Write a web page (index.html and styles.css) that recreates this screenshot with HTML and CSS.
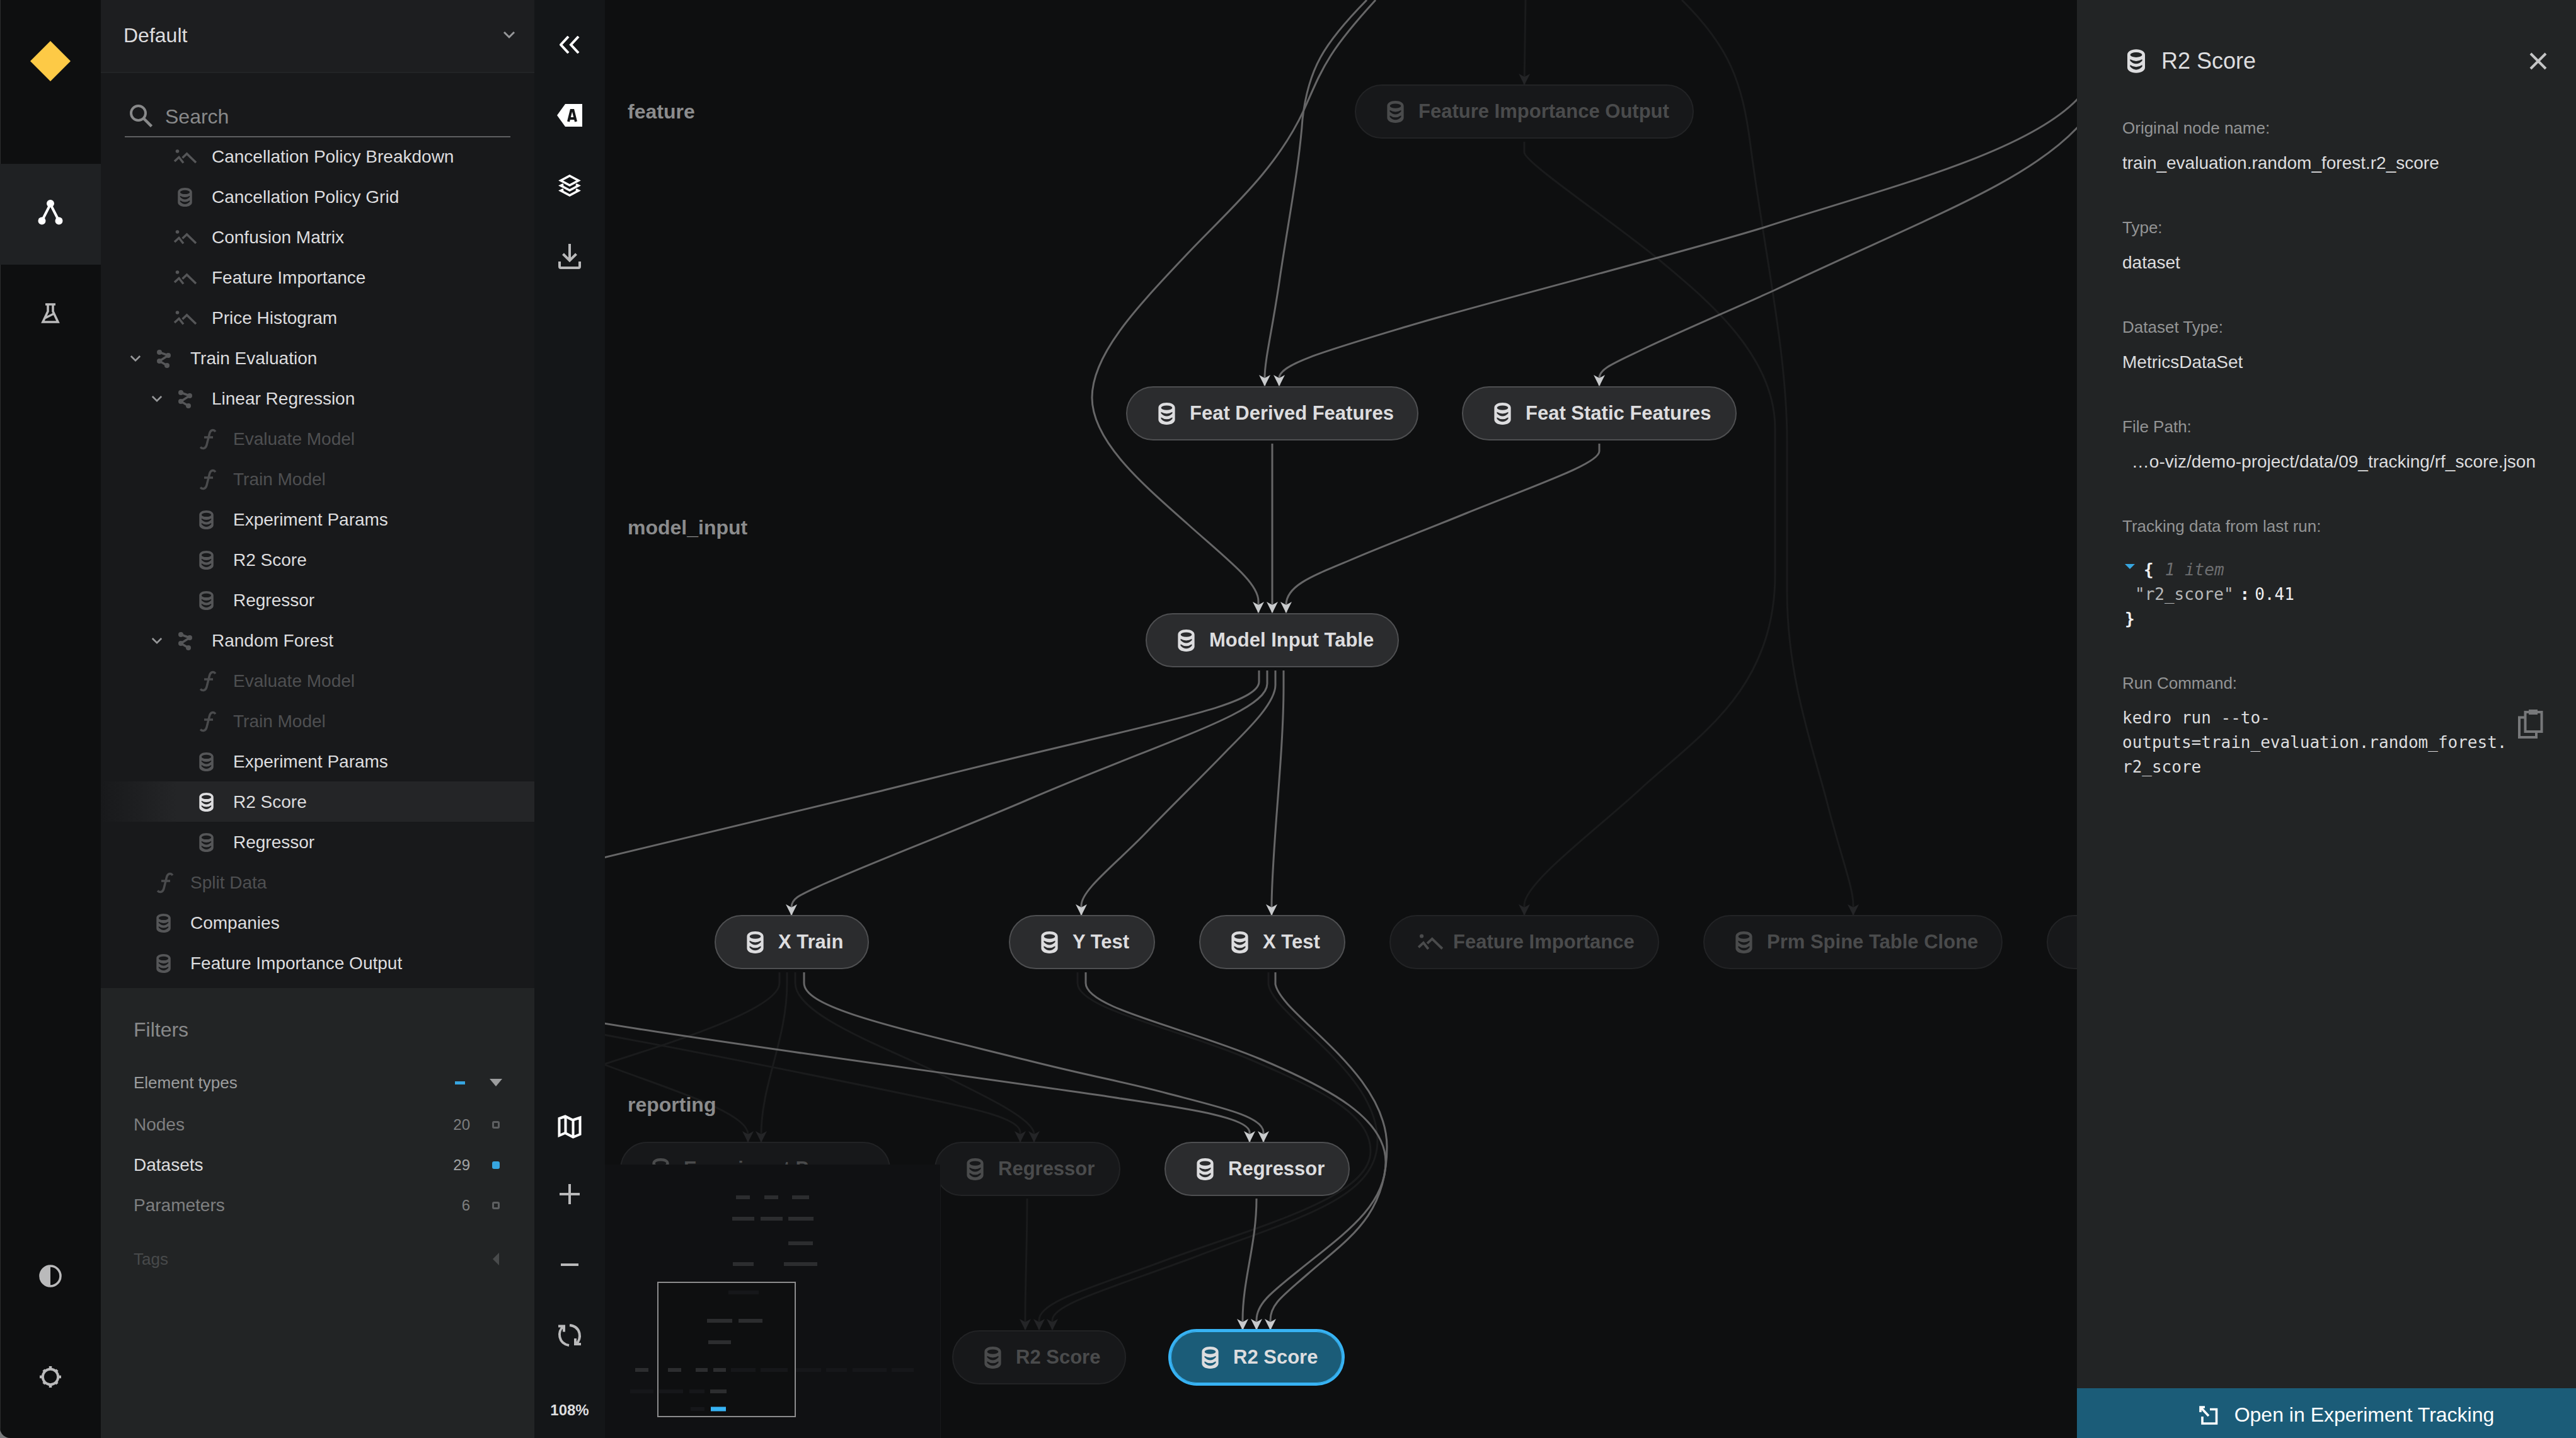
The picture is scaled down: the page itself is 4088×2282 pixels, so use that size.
FILE: index.html
```html
<!DOCTYPE html>
<html lang="en">
<head>
<meta charset="utf-8">
<title>Kedro-Viz</title>
<link rel="stylesheet" href="styles.css">
</head>
<body>
<svg class="sprite" aria-hidden="true">
  <symbol id="i-data" viewBox="0 0 24 32"><path fill="currentColor" fill-rule="evenodd" d="M0 7.500C0 3 5 0 12 0s12 3 12 7.500v17C24 29 19 32 12 32S0 29 0 24.500zM3.900 7.400a8.100 3.400 0 0016.200 0a8.100 3.400 0 00-16.200 0zM3.800 13.500Q12 18.300 20.200 13.500V15.500Q12 23.900 3.800 15.500zM3.800 21.200Q12 26.800 20.200 21.200V23.500Q12 31.900 3.800 23.500z"/></symbol>
  <symbol id="i-plot" viewBox="0 0 36 24"><circle cx="5.500" cy="3" r="2.800" fill="currentColor"/><path d="M1 19l7-6.500 7 9M13.500 13.500l7-6.500L35 21" fill="none" stroke="currentColor" stroke-width="3.500"/></symbol>
  <symbol id="i-pipe" viewBox="0 0 24 30"><g fill="currentColor"><circle cx="5" cy="5" r="4"/><circle cx="19" cy="10" r="4"/><circle cx="5" cy="19" r="4"/><circle cx="17" cy="26" r="4"/></g><path d="M5 5l14 5L5 19l12 7" fill="none" stroke="currentColor" stroke-width="3.500"/></symbol>
  <symbol id="i-func" viewBox="0 0 28 34"><path d="M26 5c-3-4-8-3-9.500 3L12 26c-1.500 6-6.500 7-10 3.500M8 14h14" fill="none" stroke="currentColor" stroke-width="3.500"/></symbol>
  <symbol id="i-down" viewBox="0 0 20 14"><path d="M2 2l8 8 8-8" fill="none" stroke="currentColor" stroke-width="3"/></symbol>
</svg>
<div class="app">
  <nav class="nav">
    <a class="nav-logo" href="#" aria-label="Kedro"><svg width="64" height="64" viewBox="0 0 64 64"><path d="M32 0l32 32-32 32L0 32z" fill="#fdca46"/></svg></a>
    <a class="nav-link active" href="#" aria-label="Flowchart"><svg width="40" height="42" viewBox="0 0 40 42"><path d="M6.500 34.500L20 8l13.500 26.500" fill="none" stroke="currentColor" stroke-width="4"/><g fill="currentColor"><circle cx="20" cy="7" r="6"/><circle cx="6.500" cy="34.500" r="6"/><circle cx="33.500" cy="34.500" r="6"/></g></svg></a>
    <a class="nav-link" href="#" aria-label="Experiment tracking"><svg width="30" height="32" viewBox="0 0 30 32"><path d="M7 2h16M11 2v11L3 30h24l-8-17V2M6 24l14-7" fill="none" stroke="currentColor" stroke-width="3.600"/></svg></a>
    <div class="nav-foot">
      <button class="nav-link" type="button" aria-label="Toggle theme"><svg width="36" height="36" viewBox="0 0 36 36"><circle cx="18" cy="18" r="16" fill="none" stroke="currentColor" stroke-width="3.600"/><path d="M18 2a16 16 0 000 32z" fill="currentColor"/></svg></button>
      <button class="nav-link" type="button" aria-label="Settings"><svg width="36" height="36" viewBox="0 0 36 36"><circle cx="18" cy="18" r="12.200" fill="none" stroke="currentColor" stroke-width="4"/><path d="M18 1v5M18 30v5M1 18h5M30 18h5M7 7l3 3M26 26l3 3M29 7l-3 3M10 26l-3 3" stroke="currentColor" stroke-width="4.500"/></svg></button>
    </div>
  </nav>

  <aside class="sidebar">
    <div class="pipeline">
      <select aria-label="Pipeline"><option>Default</option></select>
      <svg width="22" height="14"><use href="#i-down"/></svg>
    </div>
    <div class="search">
      <label class="search-field">
        <svg width="36" height="36" viewBox="0 0 36 36"><circle cx="13.500" cy="13.500" r="11.500" fill="none" stroke="currentColor" stroke-width="4"/><path d="M22 22l12.500 12.500" stroke="currentColor" stroke-width="4.500"/></svg>
        <input type="search" placeholder="Search" aria-label="Search">
      </label>
    </div>
    <ul class="tree">
      <li class="row l1"><span class="tog"></span><svg class="ic plot"><use href="#i-plot"/></svg><a href="#">Cancellation Policy Breakdown</a></li>
      <li class="row l1"><span class="tog"></span><svg class="ic data"><use href="#i-data"/></svg><a href="#">Cancellation Policy Grid</a></li>
      <li class="row l1"><span class="tog"></span><svg class="ic plot"><use href="#i-plot"/></svg><a href="#">Confusion Matrix</a></li>
      <li class="row l1"><span class="tog"></span><svg class="ic plot"><use href="#i-plot"/></svg><a href="#">Feature Importance</a></li>
      <li class="row l1"><span class="tog"></span><svg class="ic plot"><use href="#i-plot"/></svg><a href="#">Price Histogram</a></li>
      <li class="row"><button class="tog" type="button" aria-label="Collapse Train Evaluation"><svg><use href="#i-down"/></svg></button><svg class="ic pipe"><use href="#i-pipe"/></svg><a href="#">Train Evaluation</a></li>
      <li class="row l1"><button class="tog" type="button" aria-label="Collapse Linear Regression"><svg><use href="#i-down"/></svg></button><svg class="ic pipe"><use href="#i-pipe"/></svg><a href="#">Linear Regression</a></li>
      <li class="row l2 off"><span class="tog"></span><svg class="ic func"><use href="#i-func"/></svg><a href="#">Evaluate Model</a></li>
      <li class="row l2 off"><span class="tog"></span><svg class="ic func"><use href="#i-func"/></svg><a href="#">Train Model</a></li>
      <li class="row l2"><span class="tog"></span><svg class="ic data"><use href="#i-data"/></svg><a href="#">Experiment Params</a></li>
      <li class="row l2"><span class="tog"></span><svg class="ic data"><use href="#i-data"/></svg><a href="#">R2 Score</a></li>
      <li class="row l2"><span class="tog"></span><svg class="ic data"><use href="#i-data"/></svg><a href="#">Regressor</a></li>
      <li class="row l1"><button class="tog" type="button" aria-label="Collapse Random Forest"><svg><use href="#i-down"/></svg></button><svg class="ic pipe"><use href="#i-pipe"/></svg><a href="#">Random Forest</a></li>
      <li class="row l2 off"><span class="tog"></span><svg class="ic func"><use href="#i-func"/></svg><a href="#">Evaluate Model</a></li>
      <li class="row l2 off"><span class="tog"></span><svg class="ic func"><use href="#i-func"/></svg><a href="#">Train Model</a></li>
      <li class="row l2"><span class="tog"></span><svg class="ic data"><use href="#i-data"/></svg><a href="#">Experiment Params</a></li>
      <li class="row l2 selected"><span class="tog"></span><svg class="ic data"><use href="#i-data"/></svg><a href="#">R2 Score</a></li>
      <li class="row l2"><span class="tog"></span><svg class="ic data"><use href="#i-data"/></svg><a href="#">Regressor</a></li>
      <li class="row off"><span class="tog"></span><svg class="ic func"><use href="#i-func"/></svg><a href="#">Split Data</a></li>
      <li class="row"><span class="tog"></span><svg class="ic data"><use href="#i-data"/></svg><a href="#">Companies</a></li>
      <li class="row"><span class="tog"></span><svg class="ic data"><use href="#i-data"/></svg><a href="#">Feature Importance Output</a></li>
    </ul>
    <section class="filters">
      <h2>Filters</h2>
      <div class="group">
        <label for="f-types">Element types</label>
        <input class="dash" id="f-types" type="checkbox">
        <button type="button" aria-label="Collapse element types"><svg width="20" height="12" viewBox="0 0 20 12"><path d="M0 0h20L10 12z" fill="currentColor"/></svg></button>
      </div>
      <label class="filter"><span>Nodes</span><span class="count">20</span><input type="checkbox"></label>
      <label class="filter on"><span>Datasets</span><span class="count">29</span><input type="checkbox" checked></label>
      <label class="filter"><span>Parameters</span><span class="count">6</span><input type="checkbox"></label>
      <div class="group tags">
        <span>Tags</span>
        <button type="button" aria-label="Expand tags"><svg width="10" height="20" viewBox="0 0 10 20"><path d="M10 0v20L0 10z" fill="currentColor"/></svg></button>
      </div>
    </section>
  </aside>

  <div class="toolbar">
    <button class="lit" type="button" aria-label="Hide menu"><svg width="32" height="28" viewBox="0 0 32 28"><path d="M14 1L2 14l12 13M30 1L18 14l12 13" fill="none" stroke="currentColor" stroke-width="4"/></svg></button>
    <button class="lit" type="button" aria-label="Hide text labels"><svg width="40" height="36" viewBox="0 0 40 36"><path d="M13 0h27v36H13L0 18z" fill="currentColor"/><path d="M18 28L22.500 10h3L30 28M19.500 23h9" fill="none" stroke="#141618" stroke-width="4"/></svg></button>
    <button class="lit" type="button" aria-label="Hide layers"><svg width="36" height="36" viewBox="0 0 36 36"><g fill="none" stroke="currentColor" stroke-width="3.600"><path d="M18 2l14 7.500L18 17 4 9.500z"/><path d="M8 15.500l-4 2L18 25l14-7.500-4-2M8 23.500l-4 2L18 33l14-7.500-4-2"/></g></svg></button>
    <button type="button" aria-label="Export graph"><svg width="36" height="40" viewBox="0 0 36 40"><path d="M18 0v27M7.500 16L18 26.500 28.500 16M2 28v8q0 2 2 2h28q2 0 2-2v-8" fill="none" stroke="currentColor" stroke-width="4"/></svg></button>
    <div class="zoom">
      <button class="lit map" type="button" aria-label="Hide minimap"><svg width="38" height="38" viewBox="0 0 38 38"><path d="M2.500 6L12 2.500l12 6 11.500-4V31L24.500 35.500 12 29 2.500 33zM12.500 3v26M24.500 9v26" fill="none" stroke="currentColor" stroke-width="4"/></svg></button>
      <button type="button" aria-label="Zoom in"><svg width="32" height="32" viewBox="0 0 32 32"><path d="M16 0v32M0 16h32" stroke="currentColor" stroke-width="4"/></svg></button>
      <button type="button" aria-label="Zoom out"><svg width="28" height="4" viewBox="0 0 28 4"><path d="M0 2h28" stroke="currentColor" stroke-width="4"/></svg></button>
      <button type="button" aria-label="Reset zoom"><svg width="38" height="36" viewBox="0 0 38 36"><path d="M1 3.500h9v9M9 4C-1 12 1 31 18 34M37 32h-9v-9M29 32C39 24 37 4 19 2" fill="none" stroke="currentColor" stroke-width="4"/></svg></button>
      <div class="percent">108%</div>
    </div>
  </div>

  <main class="canvas">
    <svg class="edges" aria-hidden="true">
      <defs>
        <marker id="arrow" markerUnits="userSpaceOnUse" markerWidth="18" markerHeight="18" refX="17" refY="9" orient="auto"><path d="M0 0l18 9-18 9 5-9z"/></marker>
        <marker id="arrow-dim" markerUnits="userSpaceOnUse" markerWidth="18" markerHeight="18" refX="17" refY="9" orient="auto"><path d="M0 0l18 9-18 9 5-9z"/></marker>
      </defs>
      <g transform="translate(-960 0)">
        <g class="dim">
          <path d="M2421 0Q2420 60 2419 134"/>
          <path d="M2419 225V242C2419 258 2570 359 2635 414C2700 469 2817 560 2817 680V912C2817 1090 2700 1165 2611 1245C2540 1312 2419 1400 2419 1436V1452"/>
          <path d="M2669 0C2745 75 2765 130 2778 231C2800 400 2836 560 2836 700V940C2836 1080 2880 1195 2902 1283C2925 1370 2941 1410 2941 1436V1452"/>
          <path d="M958 1642C1120 1672 1300 1708 1454 1740C1550 1760 1619 1775 1619 1797V1812"/>
          <path d="M1262 1543V1560C1262 1610 1400 1660 1479 1698C1560 1738 1641 1775 1641 1800V1812"/>
          <path d="M1249 1543V1560C1249 1650 1208 1720 1208 1800V1812"/>
          <path d="M958 1689C1060 1728 1187 1765 1187 1800V1812"/>
          <path d="M1710 1543V1560C1710 1600 1860 1630 1976 1678C2090 1727 2175 1765 2175 1827C2175 1900 2000 1945 1852 1999C1730 2045 1649 2065 1649 2095V2110"/>
          <path d="M2013 1543V1562C2020 1612 2186 1700 2186 1810C2186 1905 2050 1935 1893 1996C1760 2045 1670 2070 1670 2095V2110"/>
          <path d="M1630 1902C1630 1980 1627 2030 1627 2095V2110"/>
        </g>
        <path class="dim-tail" d="M1237 1543V1560C1237 1600 1080 1650 958 1689"/>
        <g class="lit">
          <path d="M2169 0C2100 70 2076 110 2067 189C2062 260 2047 337 2032 435C2020 520 2007 570 2007 600V612"/>
          <path d="M2183 0C2105 85 2098 110 2069 175C2024 272 1946 337 1884 403C1809 483 1733 560 1733 631C1733 700 1814 769 1884 831C1950 890 1997 925 1997 954V972"/>
          <path d="M3298 156C3215 245 2979 302 2799 361C2660 404 2363 479 2233 518C2103 557 2030 578 2030 600V612"/>
          <path d="M3298 201C3215 290 3060 345 2815 461C2740 495 2680 520 2614 551C2560 577 2538 585 2538 600V612"/>
          <path d="M2019 704V972"/>
          <path d="M2538 704V716C2538 735 2450 765 2328 814C2250 846 2190 868 2140 890C2080 915 2041 930 2041 960V972"/>
          <path d="M2011 1064V1085C2011 1130 1850 1175 1629 1270C1500 1325 1400 1362 1307 1403C1270 1420 1256 1425 1256 1440V1452"/>
          <path d="M2024 1064V1087C2024 1115 1983 1155 1950 1188C1910 1230 1865 1273 1820 1320C1770 1372 1716 1412 1716 1437V1452"/>
          <path d="M2037 1064V1090C2037 1200 2018 1350 2018 1440V1452"/>
          <path d="M1276 1543V1560C1276 1600 1420 1630 1636 1684C1740 1710 1790 1718 1852 1735C1940 1758 2005 1772 2005 1797V1812"/>
          <path d="M958 1624C1150 1656 1440 1694 1752 1739C1850 1755 1983 1770 1983 1797V1812"/>
          <path d="M1723 1543V1560C1723 1600 1880 1630 2001 1681C2110 1727 2199 1775 2199 1844C2199 1915 2130 1960 2060 2017C2015 2053 1994 2070 1994 2095V2110"/>
          <path d="M2024 1543V1562C2034 1612 2201 1700 2201 1820C2201 1930 2140 1965 2075 2022C2035 2057 2016 2070 2016 2095V2110"/>
          <path d="M1994 1902C1994 1975 1972 2030 1972 2095V2110"/>
        </g>
        <path class="lit-tail" d="M1998 1064V1082C1998 1115 1860 1142 1705 1180C1560 1214 1500 1230 1399 1255L958 1361"/>
      </g>
    </svg>

    <h3 class="layer" style="left:36px;top:157px">feature</h3>
    <h3 class="layer" style="left:36px;top:817px">model_input</h3>
    <h3 class="layer" style="left:36px;top:1733px">reporting</h3>

    <button class="node dim" type="button" style="left:1190px;top:134px;width:538px"><svg class="data"><use href="#i-data"/></svg>Feature Importance Output</button>
    <button class="node" type="button" style="left:827px;top:613px;width:464px"><svg class="data"><use href="#i-data"/></svg>Feat Derived Features</button>
    <button class="node" type="button" style="left:1360px;top:613px;width:436px"><svg class="data"><use href="#i-data"/></svg>Feat Static Features</button>
    <button class="node" type="button" style="left:858px;top:973px;width:402px"><svg class="data"><use href="#i-data"/></svg>Model Input Table</button>
    <button class="node" type="button" style="left:174px;top:1452px;width:245px"><svg class="data"><use href="#i-data"/></svg>X Train</button>
    <button class="node" type="button" style="left:641px;top:1452px;width:232px"><svg class="data"><use href="#i-data"/></svg>Y Test</button>
    <button class="node" type="button" style="left:943px;top:1452px;width:232px"><svg class="data"><use href="#i-data"/></svg>X Test</button>
    <button class="node dim" type="button" style="left:1245px;top:1452px;width:428px"><svg class="plot"><use href="#i-plot"/></svg>Feature Importance</button>
    <button class="node dim" type="button" style="left:1743px;top:1452px;width:475px"><svg class="data"><use href="#i-data"/></svg>Prm Spine Table Clone</button>
    <button class="node dim" type="button" style="left:2288px;top:1452px;width:400px" aria-label="Parameters"></button>
    <button class="node dim" type="button" style="left:24px;top:1812px;width:429px"><svg class="data"><use href="#i-data"/></svg>Experiment Params</button>
    <button class="node dim" type="button" style="left:523px;top:1812px;width:295px"><svg class="data"><use href="#i-data"/></svg>Regressor</button>
    <button class="node" type="button" style="left:888px;top:1812px;width:294px"><svg class="data"><use href="#i-data"/></svg>Regressor</button>
    <button class="node dim" type="button" style="left:551px;top:2111px;width:276px"><svg class="data"><use href="#i-data"/></svg>R2 Score</button>
    <button class="node current" type="button" style="left:896px;top:2111px;width:276px"><svg class="data"><use href="#i-data"/></svg>R2 Score</button>

    <div class="minimap">
      <svg viewBox="960 1848 532 434" aria-label="Minimap">
        <rect x="1044" y="2035" width="218" height="213" fill="#0e0f10" stroke="#8c8c8d" stroke-width="2"/>
        <path stroke="#2c2d2f" stroke-width="6" d="M1168 1900h22M1213 1900h22M1257 1900h27M1162 1934h35M1207 1934h35M1251 1934h40M1251 1973h39M1163 2006h33M1244 2006h53M1122 2096h40M1172 2096h38M1124 2130h36M1008 2174h21M1060 2174h21M1104 2174h19M1132 2174h20M1127 2208h26"/>
        <path stroke="#16171a" stroke-width="6" d="M1156 2051h48M1160 2174h39M1207 2174h43M1263 2174h40M1311 2174h33M1353 2174h54M1415 2174h35M1000 2208h37M1046 2208h38M1094 2208h24M1096 2236h22"/>
        <path stroke="#37b3f4" stroke-width="7" d="M1128 2236h24"/>
      </svg>
    </div>
  </main>

  <aside class="panel">
    <header class="panel-head">
      <svg width="28" height="38"><use href="#i-data"/></svg>
      <h1>R2 Score</h1>
      <button type="button" aria-label="Close"><svg width="28" height="28" viewBox="0 0 28 28"><path d="M2 2l24 24M26 2L2 26" stroke="currentColor" stroke-width="4"/></svg></button>
    </header>
    <dl class="meta">
      <div><dt>Original node name:</dt><dd>train_evaluation.random_forest.r2_score</dd></div>
      <div><dt>Type:</dt><dd>dataset</dd></div>
      <div><dt>Dataset Type:</dt><dd>MetricsDataSet</dd></div>
      <div><dt>File Path:</dt><dd class="path">…o-viz/demo-project/data/09_tracking/rf_score.json</dd></div>
      <div>
        <dt>Tracking data from last run:</dt>
        <dd class="json">
          <div class="json-open"><button type="button" aria-label="Collapse data"><svg width="16" height="8" viewBox="0 0 16 8"><path d="M0 0h16L8 8z" fill="currentColor"/></svg></button><b>{</b><i>1 item</i></div>
          <div class="json-item"><span>"r2_score"</span><b>:</b><span class="num">0.41</span></div>
          <div class="json-close"><b>}</b></div>
        </dd>
      </div>
      <div>
        <dt>Run Command:</dt>
        <dd class="command">
          <code>kedro run --to-<br>outputs=train_evaluation.random_forest.<br>r2_score</code>
          <button type="button" aria-label="Copy run command"><svg width="40" height="46" viewBox="0 0 40 46"><path d="M11.500 4h26v31h-26zM9.500 12.500H2V44h27v-7" fill="none" stroke="currentColor" stroke-width="4"/><path d="M17 0h14v8H17z" fill="currentColor"/></svg></button>
        </dd>
      </div>
    </dl>
    <button class="open" type="button"><svg width="30" height="30" viewBox="0 0 30 30"><path d="M2 10V2h7M2 2l13 14M17 5.500h10.500v22.500H5V17" fill="none" stroke="currentColor" stroke-width="3.600"/></svg>Open in Experiment Tracking</button>
  </aside>
</div>
</body>
</html>
```
FILE: styles.css
```css
* { box-sizing: border-box; }

html { background: #77787a; }

body {
  margin: 0;
  font-family: "Liberation Sans", Arial, sans-serif;
  font-size: 28px;
  color: #dddddf;
}

button, input, select { font: inherit; color: inherit; }

button {
  display: flex;
  align-items: center;
  justify-content: center;
  padding: 0;
  border: 0;
  background: none;
  cursor: pointer;
}

a { color: inherit; text-decoration: none; }

h1, h2, h3, ul, dl, dd { margin: 0; padding: 0; font-weight: normal; }

svg { display: block; flex: none; }

.sprite { position: absolute; width: 0; height: 0; }

.app {
  display: flex;
  min-height: 100vh;
  overflow: hidden;
  border-bottom-left-radius: 16px;
  background: #0e0f10;
}

/* Left navigation */
.nav {
  display: flex;
  flex: none;
  flex-direction: column;
  width: 160px;
  box-shadow: inset 1px 0 #2c2d2f;
}

.nav-logo { display: flex; justify-content: center; height: 260px; padding-top: 65px; }

.nav-link {
  display: flex;
  align-items: center;
  justify-content: center;
  width: 100%;
  height: 160px;
  padding-bottom: 6px;
  color: #bababb;
}

.nav-link.active { background: #1f2123; color: #fff; }

.nav-foot { margin-top: auto; padding-bottom: 14px; }

/* Sidebar */
.sidebar {
  display: flex;
  flex: none;
  flex-direction: column;
  width: 688px;
  background: #18191b;
}

.pipeline {
  display: flex;
  align-items: center;
  height: 116px;
  padding: 0 29px 2px 36px;
  border-bottom: 2px solid #222426;
  background: #1d1e20;
}

.pipeline select {
  flex: 1;
  padding: 0;
  border: 0;
  background: none;
  font-size: 32px;
  appearance: none;
}

.pipeline svg { color: #97989a; }

.search { padding: 36px 38px 0; }

.search-field {
  display: flex;
  align-items: center;
  gap: 20px;
  height: 64px;
  padding-left: 8px;
  color: #88898a;
  box-shadow: 0 2px #5f6062;
}

.search-field input {
  flex: 1;
  min-width: 0;
  padding: 2px 0 0;
  border: 0;
  outline: 0;
  background: none;
  font-size: 32px;
}

.search-field input::placeholder { color: #88898a; opacity: 1; }

.tree { padding-bottom: 8px; list-style: none; }

.row { display: flex; align-items: center; height: 64px; padding: 2px 0 0 40px; }
.row.l1 { padding-left: 74px; }
.row.l2 { padding-left: 108px; }
.row.off { color: #4e4f51; }
.row.selected { background: linear-gradient(90deg, #18191b, #242527 120px); }

.tog { flex: none; width: 30px; height: 40px; color: #97989a; }
.tog svg { width: 18px; height: 13px; }

.ic { color: #555658; }
.ic.data { width: 23px; height: 30px; margin: 0 31px 0 18px; }
.ic.plot { width: 36px; height: 24px; margin: 0 24px 0 12px; }
.ic.pipe { width: 24px; height: 30px; margin: 0 30px 0 18px; }
.ic.func { width: 28px; height: 34px; margin: 0 26px 0 18px; }
.off .ic { color: #4a4b4d; }
.selected .ic { color: #dddddf; }

/* Filters */
.filters { flex: 1; padding: 40px 50px 40px 52px; background: #222425; }

.filters h2 { font-size: 32px; line-height: 52px; color: #88898a; }

.group {
  display: flex;
  align-items: center;
  height: 60px;
  margin: 28px 0 5px;
  font-size: 26px;
  color: #9c9d9e;
}

.group > :first-child { flex: 1; }

.group button { width: 22px; height: 40px; }

.group.tags { margin-top: 23px; color: #484a4b; }

.dash {
  width: 16px;
  height: 5px;
  margin: 0 38px 0 0;
  background: #37a6e0;
  appearance: none;
}

.filter { display: flex; align-items: center; height: 64px; color: #7e7f80; }

.filter > :first-child { flex: 1; }

.filter .count { font-size: 24px; }

.filter input {
  width: 12px;
  height: 12px;
  margin: 0 5px 0 35px;
  border: 3px solid #5d5f61;
  border-radius: 3px;
  appearance: none;
}

.filter.on { color: #dddddf; }
.filter.on .count { color: #a3a4a5; }
.filter.on input { border-color: #37a6e0; background: #37a6e0; }

/* Toolbar */
.toolbar {
  display: flex;
  flex: none;
  flex-direction: column;
  width: 112px;
  padding-top: 15px;
  background: #141618;
  color: #bababb;
}

.toolbar button { width: 100%; height: 112px; }
.toolbar .lit { color: #fff; }
.toolbar .map { height: 102px; }

.zoom { margin-top: auto; }

.percent {
  height: 107px;
  padding-top: 47px;
  font-size: 24px;
  font-weight: bold;
  line-height: 32px;
  text-align: center;
  color: #dddddf;
}

/* Flowchart */
.canvas { position: relative; flex: 1; min-width: 0; overflow: hidden; }

.edges { position: absolute; inset: 0; width: 100%; height: 100%; }
.edges path { fill: none; stroke-width: 3; }
.edges #arrow path { fill: #c9cbcd; }
.edges #arrow-dim path { fill: #242527; }
.edges .dim path { stroke: #1a1b1c; marker-end: url(#arrow-dim); }
.edges .lit path { stroke: #666667; marker-end: url(#arrow); }
.edges .dim-tail { stroke: #1a1b1c; }
.edges .lit-tail { stroke: #666667; }

.layer {
  position: absolute;
  font-size: 32px;
  font-weight: bold;
  line-height: 40px;
  color: #8b8c8d;
}

.node {
  position: absolute;
  justify-content: flex-start;
  height: 86px;
  border: 2px solid #4e4f51;
  border-radius: 43px;
  background: #2b2c2e;
  font-size: 31px;
  font-weight: bold;
  white-space: nowrap;
  color: #dddddf;
}

.node .data { width: 27px; height: 35px; margin: 0 23px 0 49px; }
.node .plot { width: 40px; height: 27px; margin: 0 16px 0 43px; }
.node.dim { border-color: #222325; background: #17181a; color: #4a4b4c; }
.node.current { background: #1b5c78; border-color: #37b3f4; box-shadow: 0 0 0 2px #37b3f4, inset 0 0 0 1px #37b3f4; }

.minimap {
  position: absolute;
  bottom: 0;
  left: 0;
  width: 533px;
  height: 434px;
  border-right: 1px solid #191a1c;
  background: #101113;
}

/* Metadata panel */
.panel {
  display: flex;
  flex: none;
  flex-direction: column;
  width: 792px;
  background: #222425;
}

.panel-head { display: flex; align-items: center; height: 183px; padding: 11px 44px 0 80px; }

.panel-head h1 { flex: 1; margin-left: 26px; font-size: 36px; }

.panel-head button { width: 32px; height: 40px; color: #c4c5c6; }

.meta { display: flex; flex-direction: column; gap: 62px; padding: 0 64px 0 72px; }

.meta dt { margin-bottom: 16px; font-size: 26px; line-height: 40px; color: #939495; }

.meta dd { line-height: 40px; white-space: nowrap; }

.path { text-align: right; }

.json, .command { font-family: "DejaVu Sans Mono", monospace; font-size: 26px; }

.meta .json { padding-top: 14px; line-height: 39px; }
.json b { color: #f0f0f1; }
.json i { color: #6d6e70; }
.json-open { display: flex; }
.json-open button { width: 24px; height: 28px; color: #37a6e0; }
.json-open b { margin: 0 18px 0 10px; }
.json-item { display: flex; gap: 8px; padding-left: 20px; color: #b6b7b8; }
.json-item b { margin-left: 2px; }
.json-item .num { color: #f0f0f1; }
.json-close { padding-left: 4px; }

.command { display: flex; justify-content: space-between; }
.command code { font: inherit; line-height: 39px; }
.command button { width: 40px; height: 46px; margin: 6px -12px 0 0; color: #77787a; }

.open {
  gap: 26px;
  height: 79px;
  margin-top: auto;
  padding: 6px 0 0 64px;
  background: #1b5c78;
  font-size: 32px;
  color: #fff;
}
```
